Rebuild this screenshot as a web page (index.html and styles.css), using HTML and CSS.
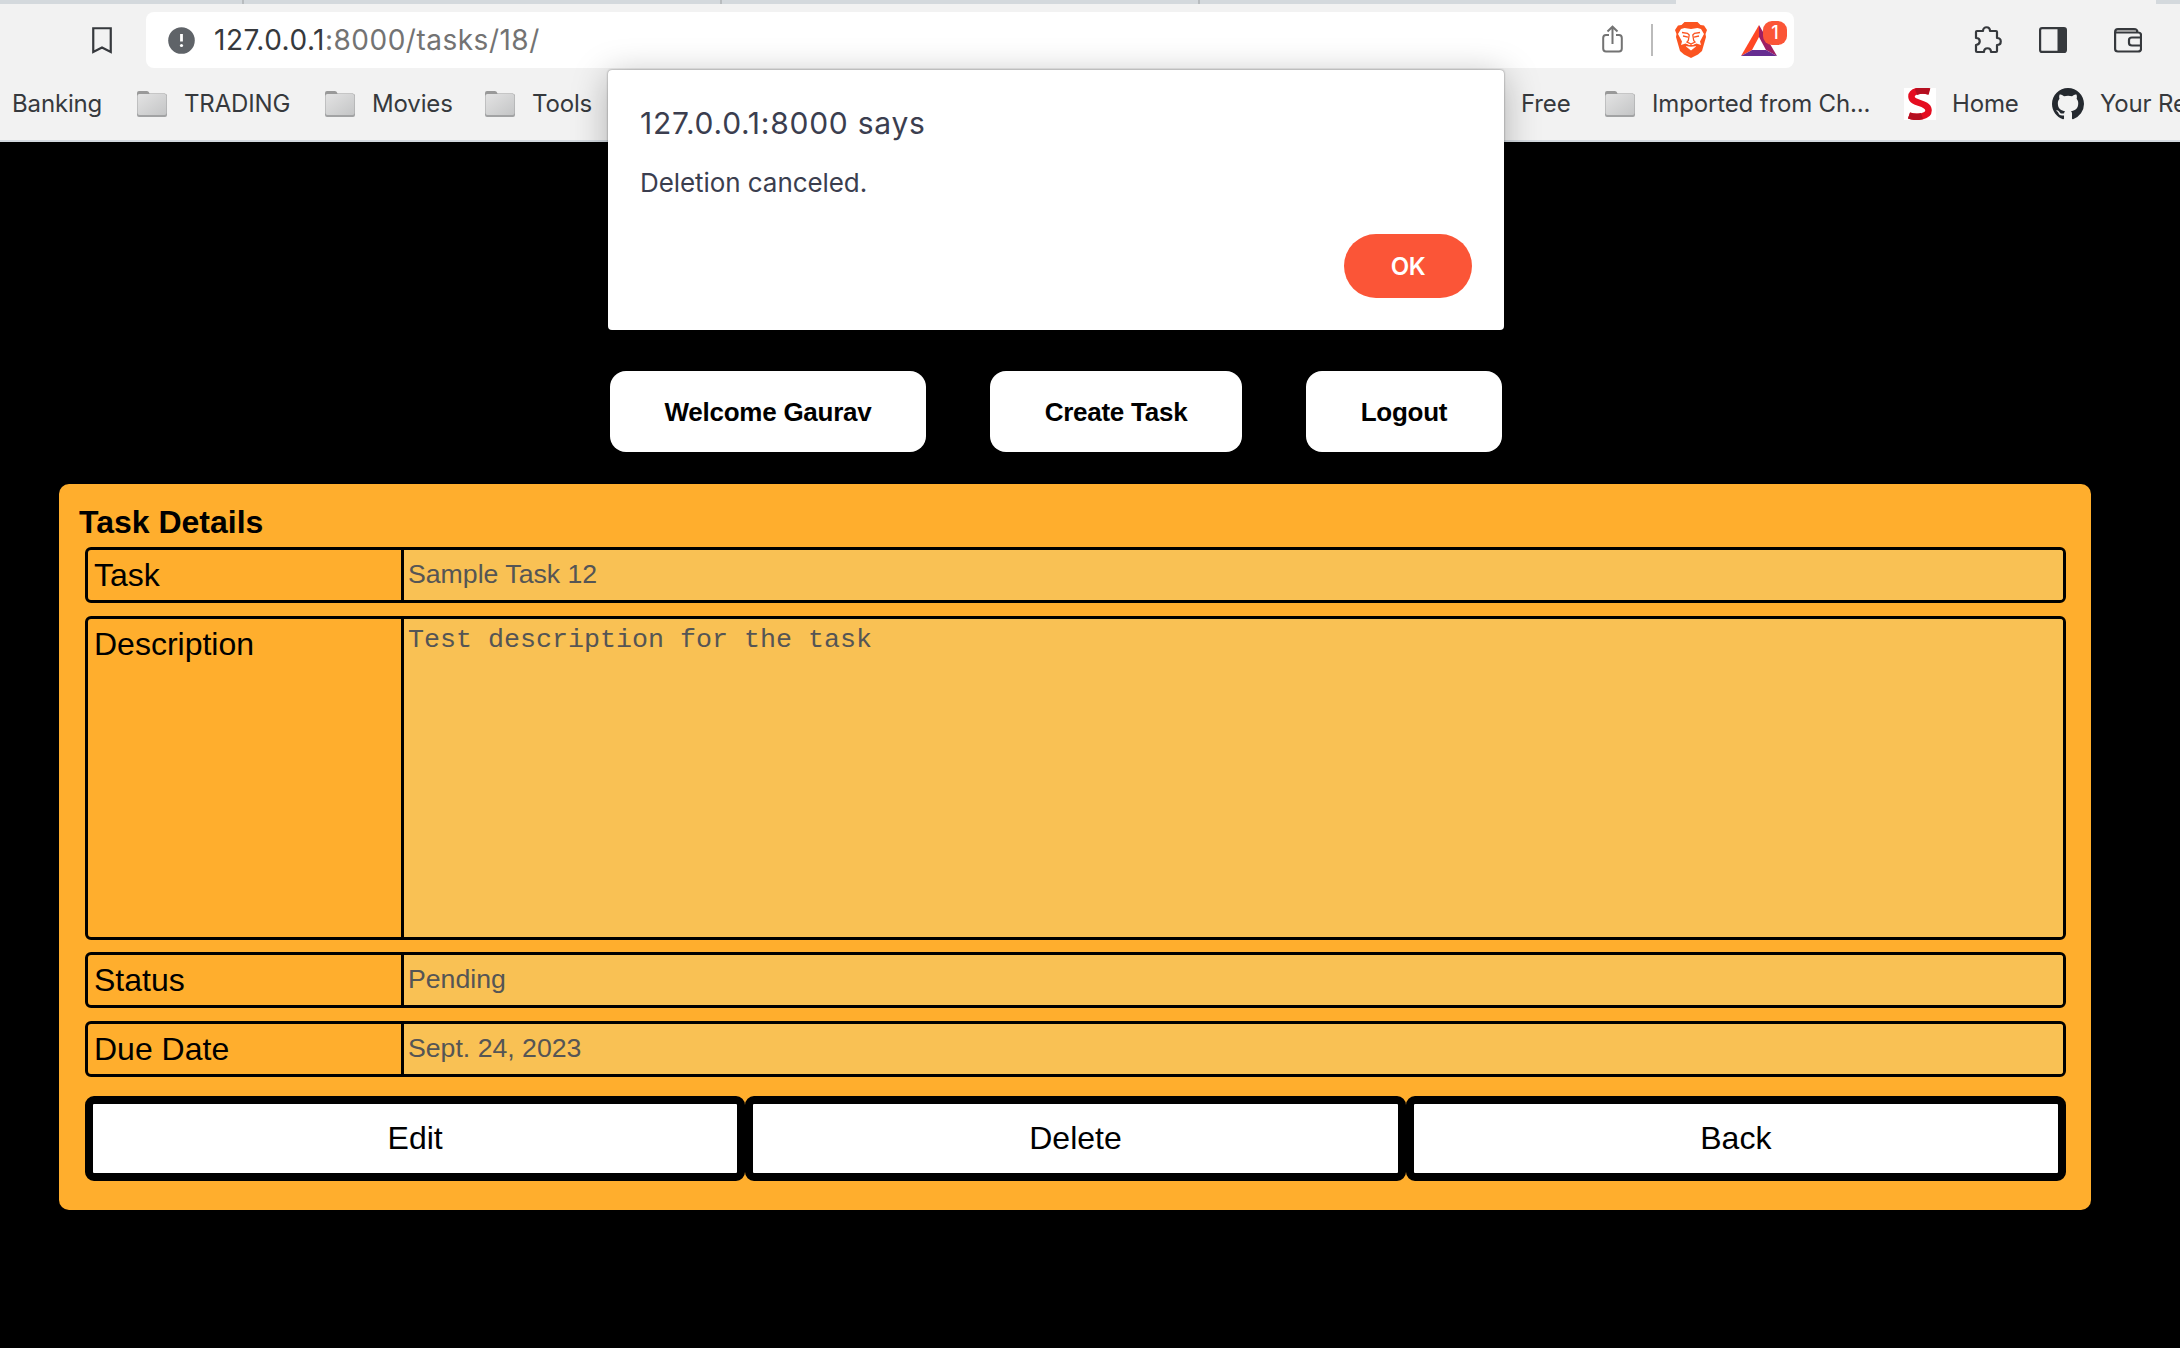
FILE: index.html
```html
<!DOCTYPE html>
<html lang="en">
<head>
<meta charset="utf-8">
<title>Task Details</title>
<link rel="stylesheet" href="styles.css">
</head>
<body>
<svg class="defs" width="0" height="0" aria-hidden="true">
  <defs>
    <linearGradient id="fold" x1="0" y1="0" x2="1" y2="1"><stop offset="0" stop-color="#e3e3e3"/><stop offset="1" stop-color="#c4c5c6"/></linearGradient>
    <symbol id="folder" viewBox="0 0 30 26"><path d="M0 6V2Q0 0 2 0H10Q12 0 12.500 2.500H28Q30 3 30 6Z" fill="#999"/><rect y="3" width="30" height="23" rx="2" fill="#a2a3a4"/><rect x=".5" y="3" width="29" height="21" rx="2" fill="url(#fold)"/></symbol>
  </defs>
</svg>
<header class="chrome">
  <div class="tabstrip"><i class="tab t1"></i><i class="tab t2"></i><i class="tab t3"></i><i class="tab t4"></i><i class="active"></i><i class="rest"></i></div>
  <div class="toolbar">
    <svg class="mark" width="20" height="27" viewBox="0 0 20 27"><path d="M1.250 1.250H18.750V25L10 20.500L1.250 25Z" fill="none" stroke="#36393d" stroke-width="2.200"/></svg>
    <div class="address">
      <svg width="27" height="27" viewBox="0 0 27 27"><circle cx="13.500" cy="13.500" r="13.300" fill="#5f6368"/><path d="M13.500 7V14.500" stroke="#fff" stroke-width="2.800"/><circle cx="13.500" cy="18.500" r="1.600" fill="#fff"/></svg>
      <span class="url"><b>127.0.0.1</b>:8000/tasks/18/</span>
      <svg class="share" width="21" height="28" viewBox="0 0 21 28"><path d="M7 10H4Q1.200 10 1.200 13V23.500Q1.200 26.500 4 26.500H17Q19.800 26.500 19.800 23.500V13Q19.800 10 17 10H14M10.500 19V2M5.500 6.500L10.500 1.700L15.500 6.500" fill="none" stroke="#737373" stroke-width="2"/></svg>
      <i class="sep"></i>
      <svg class="lion" width="32" height="36" viewBox="0 0 32 36"><path d="M9.500 0H22.500L25.500 3L29 3.500L32 8L30.500 12L31 15L27 29L23 32.500L16 36L9 32.500L5 29L1 15L1.500 12L0 8L3 3.500L6.500 3Z" fill="#fb5420"/><path d="M9.500 6L16 7L22.500 6L26 7L29 12L25 19.500L26 23L21.500 21.500L18.500 22.800L21 24.500L16 28.500L11 24.500L13.500 22.800L10.500 21.500L6 23L7 19.500L3 12L6 7Z" fill="#fff"/><path d="M7 10.500L12.500 11.300L14.200 13L13.300 18.500L12 20L16 22L20 20L18.700 18.500L17.800 13L19.500 11.300L25 10.500M8 14L13 15.200M24 14L19 15.200M16 22V24.500M12 23.500L16 24L20 23.500" fill="none" stroke="#fb5420" stroke-width="1.300"/></svg>
      <span class="bat">
        <svg width="36" height="31" viewBox="0 0 36 31"><path d="M18 0L0 31L11 25L18 12Z" fill="#ff4724"/><path d="M18 0L36 31L25 25L18 12Z" fill="#9e1f63"/><path d="M0 31H36L25 25H11Z" fill="#662d91"/></svg>
        <em class="badge">1</em>
      </span>
    </div>
    <div class="tools">
      <svg width="28" height="28" viewBox="0 0 28 28"><path d="M3 5H9C9 0 16 0 16 5H22Q23 5 23 6V12C28 12 28 19 23 19V25Q23 26 22 26H17C17 21 10 21 10 26H3Q2 26 2 25V19C7 18 7 12 2 12V6Q2 5 3 5Z" fill="none" stroke="#36393d" stroke-width="2.200" stroke-linejoin="round"/></svg>
      <svg width="28" height="26" viewBox="0 0 28 26"><rect x="1.100" y="1.100" width="25.800" height="23.800" rx="2" fill="none" stroke="#36393d" stroke-width="2.200"/><path d="M18.500 1H26V25H18.500Z" fill="#36393d"/></svg>
      <svg width="28" height="25" viewBox="0 0 28 25"><path d="M1.500 4.500H24Q27 4.500 27 7V21Q27 23.500 24 23.500H4Q1.100 23.500 1.100 21V4Q1.100 1.100 4 1.100H20Q23.500 1.100 23.500 4.500M27 9.500H18Q15 9.500 15 12V15Q15 17.500 18 17.500H27" fill="none" stroke="#36393d" stroke-width="2.200"/><path d="M3 3H22" stroke="#999" stroke-width="1.500"/></svg>
    </div>
  </div>
  <nav class="bookmarks">
    <span class="bm w1">Banking</span>
    <span class="bm w2"><svg class="f"><use href="#folder"/></svg>TRADING</span>
    <span class="bm w3"><svg class="f"><use href="#folder"/></svg>Movies</span>
    <span class="bm w4"><svg class="f"><use href="#folder"/></svg>Tools</span>
    <span class="bm w5"><svg class="f"><use href="#folder"/></svg>Free</span>
    <span class="bm w6"><svg class="f"><use href="#folder"/></svg>Imported from Ch...</span>
    <span class="bm w7"><svg width="32" height="32" viewBox="0 0 32 32"><path d="M0 0H32V32H0Z" fill="#fff"/><path d="M25 3.500C17 1 7 3 7.500 9C8 16 24 14 24.500 22C25 29 13 30 5 27.500" fill="none" stroke="#e50d20" stroke-width="6.500"/><path d="M25.500 3.500Q18 1.500 12 4M5 27.500Q12 30 18 28" fill="none" stroke="#b50f20" stroke-width="6.500"/></svg>Home</span>
    <span class="bm w8"><svg width="32" height="32" viewBox="0 0 16 16"><path fill="#24292f" d="M8 0C3.580 0 0 3.580 0 8c0 3.540 2.290 6.530 5.470 7.590.4.070.55-.17.55-.38 0-.19-.01-.82-.01-1.490-2.010.37-2.530-.49-2.690-.94-.09-.23-.48-.94-.82-1.130-.28-.15-.68-.52-.01-.53.63-.01 1.080.58 1.230.82.72 1.210 1.870.87 2.330.66.07-.52.28-.87.51-1.070-1.780-.2-3.640-.89-3.640-3.950 0-.87.31-1.590.82-2.150-.08-.2-.36-1.020.08-2.120 0 0 .67-.21 2.200.82.64-.18 1.320-.27 2-.27s1.360.09 2 .27c1.530-1.040 2.200-.82 2.200-.82.44 1.100.16 1.920.08 2.120.51.56.82 1.270.82 2.150 0 3.070-1.870 3.750-3.650 3.950.29.25.54.73.54 1.480 0 1.070-.01 1.930-.01 2.200 0 .21.15.46.55.38A8.010 8.010 0 0 0 16 8c0-4.420-3.580-8-8-8z"/></svg>Your Re</span>
  </nav>
  <section class="dialog">
    <h2>127.0.0.1:8000 says</h2>
    <p>Deletion canceled.</p>
    <button class="ok">OK</button>
  </section>
</header>
<main>
  <nav class="menu"><a class="m1">Welcome Gaurav</a><a class="m2">Create Task</a><a class="m3">Logout</a></nav>
  <section class="panel">
    <h1>Task Details</h1>
    <div class="row"><label>Task</label><div class="val">Sample Task 12</div></div>
    <div class="row tall"><label>Description</label><div class="val mono">Test description for the task</div></div>
    <div class="row"><label>Status</label><div class="val">Pending</div></div>
    <div class="row"><label>Due Date</label><div class="val">Sept. 24, 2023</div></div>
    <div class="actions"><a>Edit</a><a>Delete</a><a>Back</a></div>
  </section>
</main>
</body>
</html>
```
FILE: styles.css
```css
* { box-sizing: border-box; }
body { margin: 0; height: 1348px; background: #000; overflow: hidden; font-family: "Liberation Sans", Arial, sans-serif; color: #000; }
svg { display: block; flex: none; }
.defs { position: absolute; }
.chrome { position: relative; height: 142px; background: #f2f2f2; border-bottom: 2px solid #d3d9df; font-family: Inter, sans-serif; }
.tabstrip { display: flex; height: 4px; }
.tabstrip i { background: #d4d9dd; }
.tab { border-right: 2px solid #b8bcbf; }
.t1 { width: 244px; }
.t2 { width: 478px; }
.t3 { width: 478px; }
.tab.t4 { width: 476px; border: 0; }
.tabstrip .active { width: 480px; background: none; }
.tabstrip .rest { flex: 1; }
.toolbar { display: flex; align-items: center; height: 72px; padding-left: 92px; }
.address { display: flex; align-items: center; width: 1648px; height: 56px; margin-left: 34px; padding-left: 22px; background: #fff; border-radius: 8px; }
.url { flex: none; width: 1410px; padding-left: 19px; font-size: 28px; line-height: 36px; letter-spacing: 0.5px; color: #737373; white-space: nowrap; }
.url b { font-weight: 400; color: #36393d; }
.share { margin-left: -3px; margin-top: -2px; }
.sep { flex: none; width: 2px; height: 32px; margin: 0 22px 0 28px; background: #bbb; }
.bat { position: relative; margin-left: 34px; }
.badge { position: absolute; left: 22px; top: -4px; width: 24px; height: 24px; border-radius: 9px; background: #fb5537; color: #fff; font: 500 18px/24px Inter, sans-serif; text-align: center; }
.tools { display: flex; align-items: center; margin-left: 180px; }
.tools svg + svg { margin-left: 37px; }
.tools svg:last-child { margin-left: 47px; }
.bookmarks { display: flex; height: 55px; align-items: center; padding-left: 12px; overflow: hidden; font-size: 24px; letter-spacing: -0.15px; color: #36393d; white-space: nowrap; }
.bm { display: flex; align-items: center; flex: none; }
.f { width: 30px; height: 26px; margin-right: 17px; }
.w1 { width: 125px; }
.w2 { width: 188px; }
.w3 { width: 160px; }
.w4 { width: 989px; }
.w5 { width: 131px; }
.w6 { width: 299px; }
.w7 { width: 148px; }
.w7 svg, .w8 svg { margin-right: 16px; }
.dialog { position: absolute; left: 608px; top: 70px; width: 896px; height: 260px; padding: 32px; background: #fff; border-radius: 4px; box-shadow: 0 0 2px rgba(0,0,0,.5), 0 6px 36px rgba(0,0,0,.28); color: #3b3e4f; }
.dialog h2 { margin: 3px 0 0; font-weight: 400; font-size: 30px; line-height: 36px; letter-spacing: 0.75px; }
.dialog p { margin: 26px 0 35px; font-size: 26px; line-height: 32px; letter-spacing: -0.07px; }
.ok { display: block; width: 128px; height: 64px; margin-left: auto; border: 0; border-radius: 32px; background: #fb5537; color: #fff; font: 600 24px Inter, sans-serif; letter-spacing: -0.5px; }
main { padding-top: 229px; }
.menu { display: flex; gap: 64px; padding-left: 610px; }
.menu a { height: 81px; padding-top: 1px; border-radius: 16px; background: #fff; font-size: 26px; letter-spacing: -0.25px; font-weight: 700; line-height: 81px; text-align: center; }
.m1 { width: 316px; }
.m2 { width: 252px; }
.m3 { width: 196px; }
.panel { width: 2032px; height: 726px; margin: 32px 0 0 59px; padding: 20px 25px 0 26px; background: #ffae2d; border-radius: 10px; }
h1 { margin: 0 0 7px -6px; font-size: 32px; line-height: 36px; }
.row { display: flex; height: 56px; margin-bottom: 13px; border: 3px solid #000; border-radius: 6px; overflow: hidden; }
.row.tall { height: 324px; margin-bottom: 12px; }
.row label { width: 316px; border-right: 3px solid #000; padding: 7px 0 0 6px; font-size: 32px; line-height: 36px; }
.val { flex: 1; background: #f9c154; padding: 9px 0 0 4px; color: #555; font-size: 26.670px; line-height: 30px; }
.mono { padding-top: 6px; font-family: "Liberation Mono", monospace; }
.actions { display: flex; margin-top: 19px; }
.actions a { flex: 1; height: 85px; border: 8px solid #000; border-radius: 9px; background: #fff; font-size: 32px; line-height: 69px; text-align: center; }
```
